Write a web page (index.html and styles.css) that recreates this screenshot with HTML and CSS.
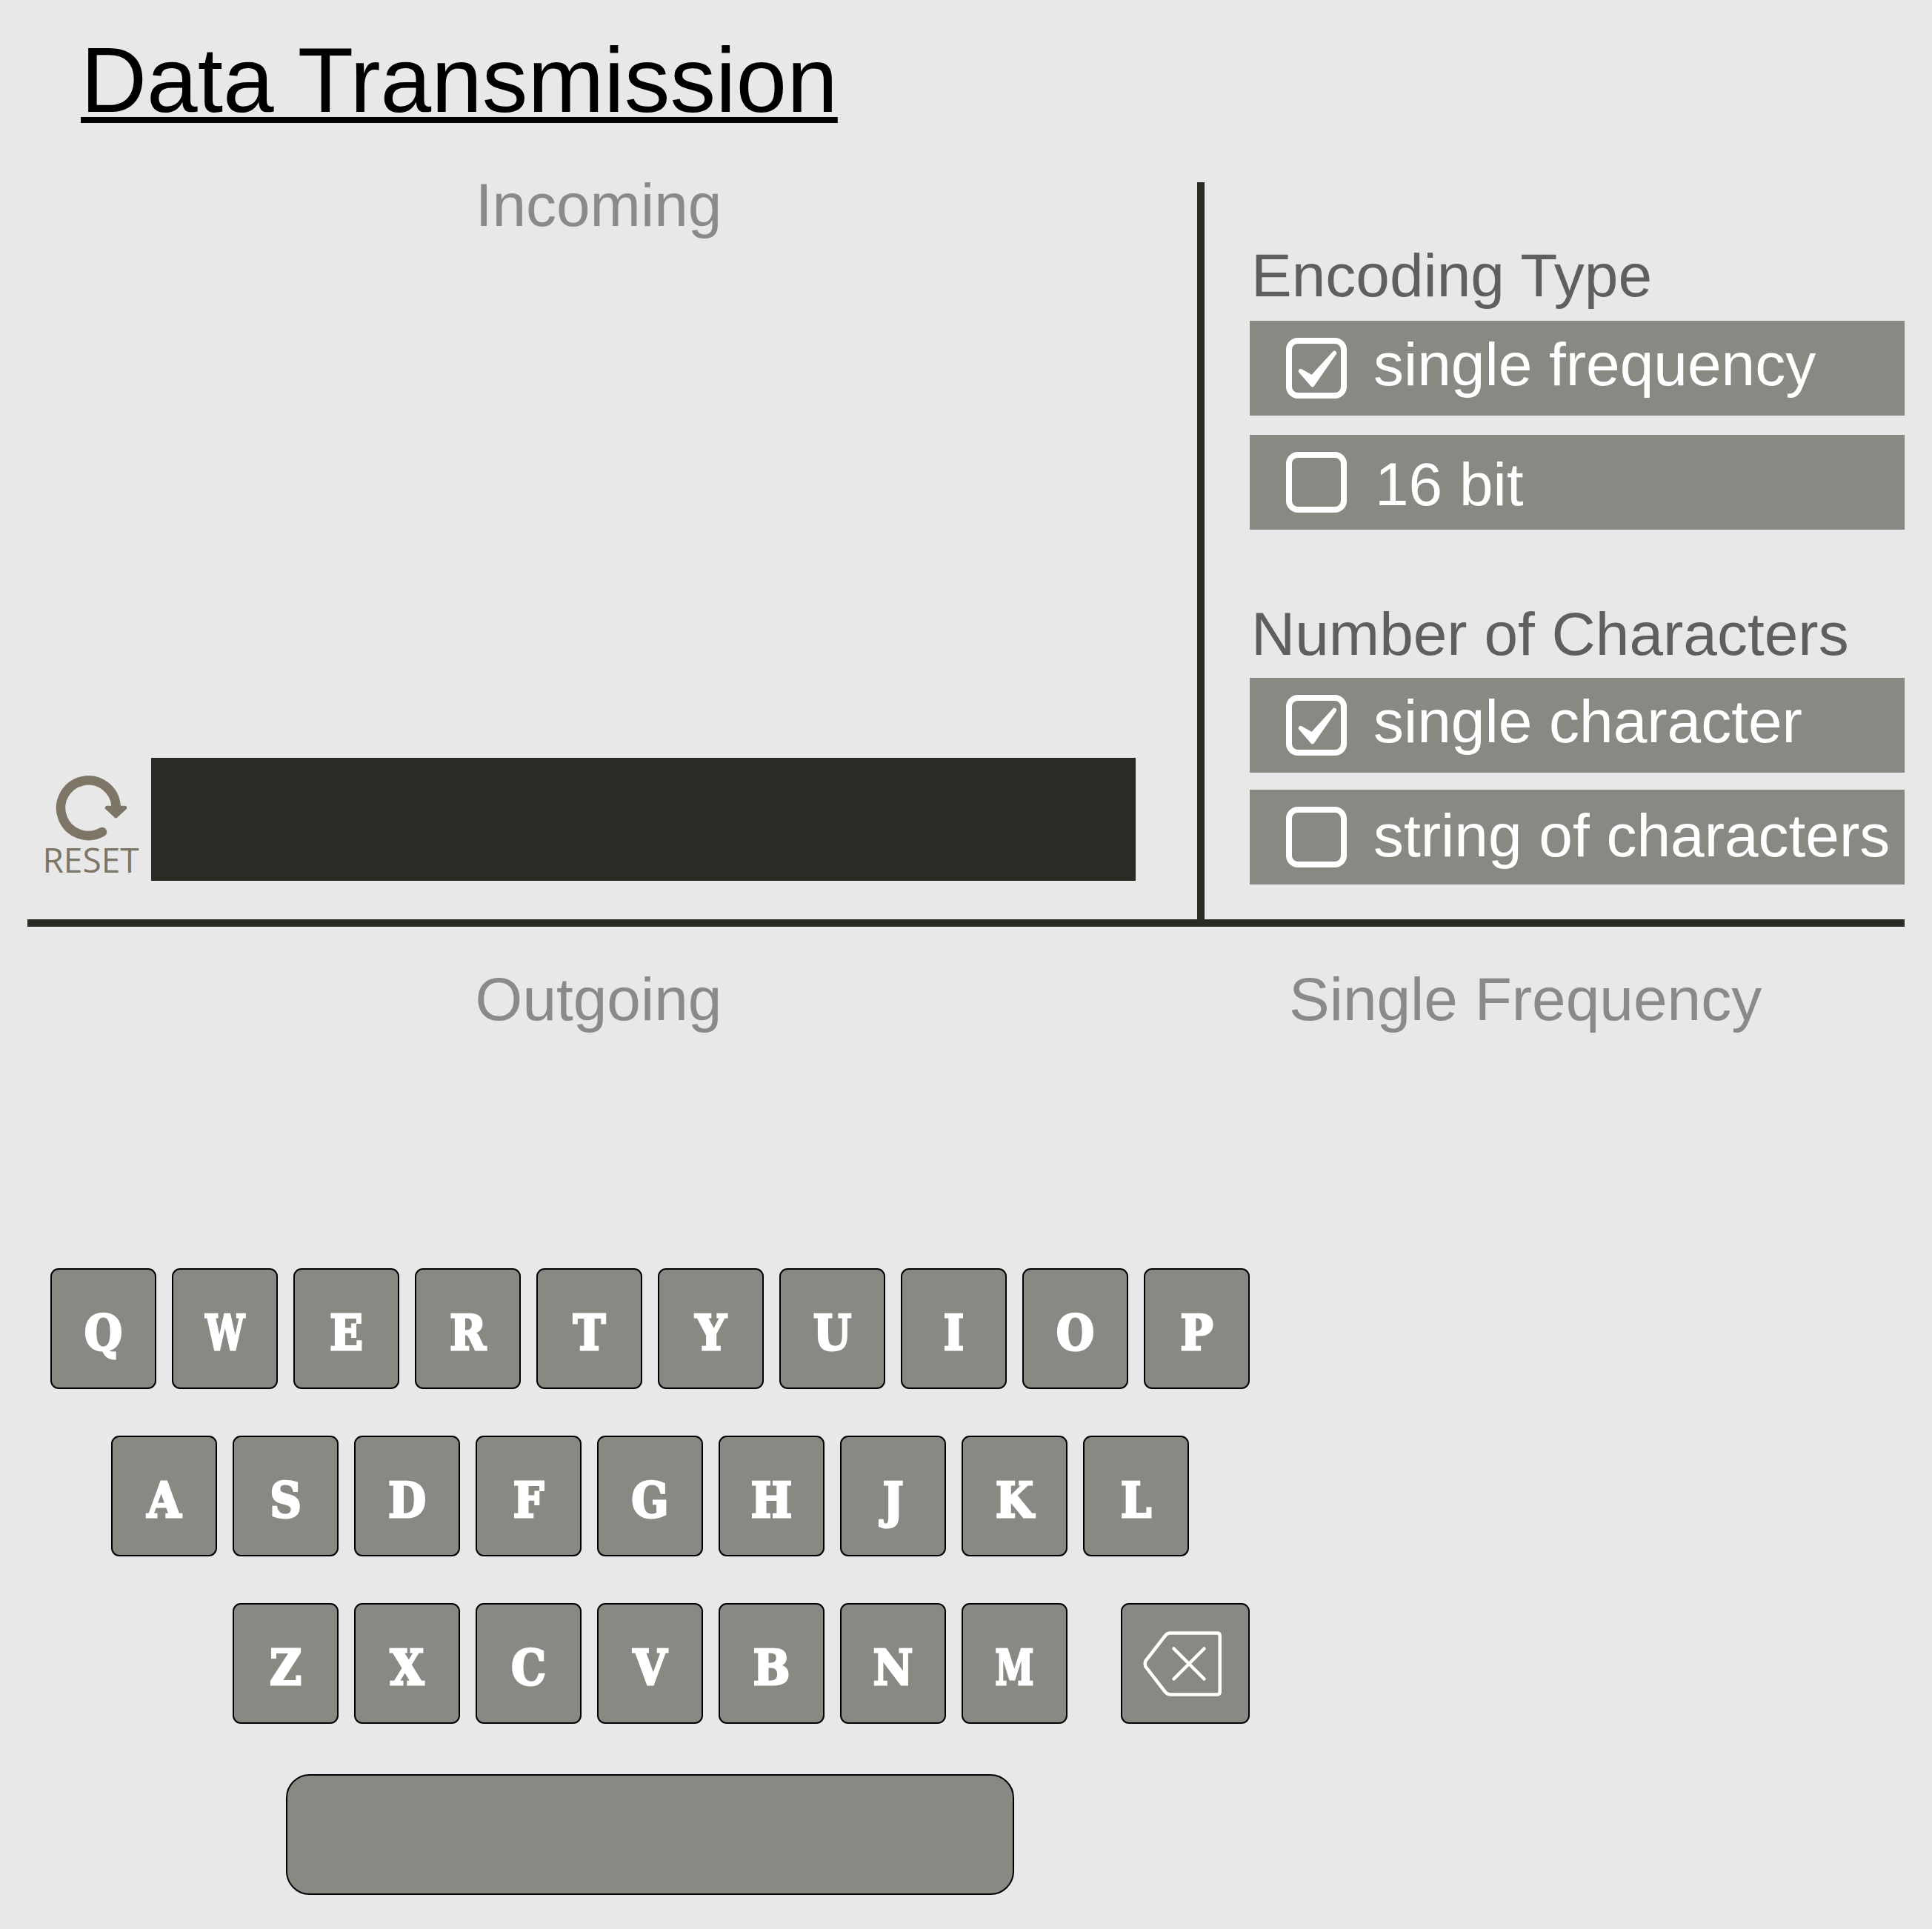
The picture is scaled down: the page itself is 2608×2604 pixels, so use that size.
FILE: index.html
```
<!DOCTYPE html>
<html lang="en">
<head>
<meta charset="utf-8">
<title>Data Transmission</title>
<link rel="stylesheet" href="styles.css">
</head>
<body>
<h1 class="title">Data Transmission</h1>
<section class="top">
  <div class="incoming">
    <div class="section-label">Incoming</div>
    <div class="receiver">
      <div class="reset">
        <svg class="reset-icon" viewBox="52 43 144 115" aria-hidden="true">
          <path d="M138 143A37.3 37.3 0 1 1 156.6 108" fill="none" stroke="#7d7565" stroke-width="12.5" stroke-linecap="round"/>
          <path d="M144.5 110.5H168.5L156.5 121.5Z" fill="#7d7565" stroke="#7d7565" stroke-width="5.5" stroke-linejoin="round"/>
        </svg>
        <div class="reset-text">RESET</div>
      </div>
      <div class="display"></div>
    </div>
  </div>
  <aside class="settings">
    <div class="group">
      <h2 class="group-title">Encoding Type</h2>
      <div class="option option-a">
        <span class="box"><svg class="tick" viewBox="0 0 68 68" aria-hidden="true"><path d="M59 13L28 47L12 38L28.5 57Z" fill="#fff" stroke="#fff" stroke-width="6" stroke-linejoin="round"/></svg></span>
        <span class="option-label">single frequency</span>
      </div>
      <div class="option option-b">
        <span class="box"></span>
        <span class="option-label">16 bit</span>
      </div>
    </div>
    <div class="group group-chars">
      <h2 class="group-title">Number of Characters</h2>
      <div class="option option-a">
        <span class="box"><svg class="tick" viewBox="0 0 68 68" aria-hidden="true"><path d="M59 13L28 47L12 38L28.5 57Z" fill="#fff" stroke="#fff" stroke-width="6" stroke-linejoin="round"/></svg></span>
        <span class="option-label">single character</span>
      </div>
      <div class="option option-c">
        <span class="box"></span>
        <span class="option-label">string of characters</span>
      </div>
    </div>
  </aside>
</section>
<section class="bottom">
  <div class="bottom-labels">
    <div class="section-label outgoing">Outgoing</div>
    <div class="section-label frequency">Single Frequency</div>
  </div>
  <div class="keyboard">
    <div class="key-row">
      <div class="key">Q</div><div class="key"><span class="narrow">W</span></div><div class="key">E</div><div class="key">R</div><div class="key">T</div><div class="key">Y</div><div class="key">U</div><div class="key">I</div><div class="key">O</div><div class="key">P</div>
    </div>
    <div class="key-row row-two">
      <div class="key">A</div><div class="key">S</div><div class="key">D</div><div class="key">F</div><div class="key">G</div><div class="key">H</div><div class="key">J</div><div class="key">K</div><div class="key">L</div>
    </div>
    <div class="key-row row-three">
      <div class="key">Z</div><div class="key">X</div><div class="key">C</div><div class="key">V</div><div class="key">B</div><div class="key">N</div><div class="key"><span class="narrow">M</span></div>
      <div class="key key-back">
        <svg class="back-icon" viewBox="78 69 114 92" aria-hidden="true">
          <path d="M120 73.6H183Q186.7 73.6 186.7 77.3V152.7Q186.7 156.4 183 156.4H120Q115.5 156.4 113 153L86.5 119Q85 115 86.5 111L113 77Q115.5 73.6 120 73.6Z" fill="none" stroke="#fff" stroke-width="4.5"/>
          <path d="M124.5 94.5L165.5 135.5M165.5 94.5L124.5 135.5" fill="none" stroke="#fff" stroke-width="4.5" stroke-linecap="round"/>
        </svg>
      </div>
    </div>
    <div class="key-row row-space">
      <div class="key key-space"></div>
    </div>
  </div>
</section>
</body>
</html>
```
FILE: styles.css
```
* { box-sizing: border-box; }
html, body { margin: 0; padding: 0; }
body {
  width: 2608px;
  height: 2604px;
  overflow: hidden;
  background: #e8e8e8;
  font-family: "Liberation Sans", Arial, sans-serif;
}
.title {
  margin: 0 0 63px;
  padding: 33px 0 0 109px;
  font-size: 123.4px;
  line-height: 150px;
  font-weight: 400;
  color: #000;
  text-decoration: underline;
  text-decoration-thickness: 8px;
  text-underline-offset: 7px;
  text-decoration-skip-ink: none;
}
.top {
  display: grid;
  grid-template-columns: 1579px 955px;
  margin-left: 37px;
  width: 2534px;
  border-bottom: 10px solid #2b2a25;
}
.section-label {
  font-size: 82px;
  line-height: 62px;
  color: #8a8a8a;
  white-space: nowrap;
}
.incoming {
  display: flex;
  flex-direction: column;
  padding-bottom: 52px;
}
.incoming .section-label { text-align: center; padding-right: 37px; }
.receiver {
  display: flex;
  align-items: flex-start;
  gap: 8px;
  margin-top: auto;
  padding-left: 15px;
}
.reset { width: 144px; flex: none; }
.reset-icon { display: block; width: 144px; height: 115px; }
.reset-text {
  font-family: "Open Sans", sans-serif;
  font-size: 46px;
  line-height: 44px;
  color: #7d7565;
  text-align: center;
  padding-right: 3px;
}
.display { width: 1329px; height: 166px; background: #2b2a25; }
.settings {
  border-left: 10px solid #2b2a25;
  padding: 81px 0 47px 61px;
}
.group-title {
  margin: 0 0 16px;
  font-size: 82px;
  line-height: 90px;
  font-weight: 400;
  color: #5f5f5f;
  padding-left: 2px;
}
.group-chars { margin-top: 96px; }
.group-chars .group-title { margin-bottom: 14px; }
.option {
  display: flex;
  align-items: flex-start;
  gap: 36px;
  width: 884px;
  height: 128px;
  padding: 23px 0 0 49px;
  background: #898883;
  color: #fff;
}
.option + .option { margin-top: 26px; }
.group-chars .option + .option { margin-top: 23px; }
.box {
  display: block;
  flex: none;
  width: 82px;
  height: 82px;
  border: 8px solid #fff;
  border-radius: 16px;
}
.tick { display: block; width: 66px; height: 66px; }
.option-label {
  font-size: 82px;
  line-height: 90px;
  white-space: nowrap;
}
.option-a .option-label { margin-top: -9px; }
.option-b .option-label { margin-top: -1px; margin-left: 2px; }
.option-c .option-label { margin-top: -6px; }
.bottom-labels {
  display: flex;
  padding-top: 67px;
}
.outgoing { width: 1616px; text-align: center; }
.frequency { margin-left: 124px; }
.keyboard {
  display: flex;
  flex-direction: column;
  gap: 63px;
  margin-top: 332px;
  padding-left: 68px;
}
.key-row { display: flex; gap: 21px; }
.row-two { margin-left: 82px; }
.row-three { margin-left: 246px; }
.row-space { margin-left: 318px; margin-top: 5px; }
.key {
  display: flex;
  align-items: center;
  justify-content: center;
  width: 143px;
  height: 163px;
  background: #898883;
  border: 2px solid #000;
  border-radius: 11px;
  color: #fff;
  font-family: "DejaVu Serif Condensed", "DejaVu Serif", serif;
  font-stretch: condensed;
  font-weight: 700;
  font-size: 65px;
  line-height: 1;
  padding-top: 11px;
  -webkit-text-stroke: 3px #fff;
}
.narrow { display: inline-block; transform: scaleX(0.8); }
.key-back { width: 174px; margin-left: 51px; padding: 0 10px 0 0; }
.back-icon { display: block; width: 114px; height: 92px; }
.key-space { width: 983px; border-radius: 32px; padding: 0; }
```
